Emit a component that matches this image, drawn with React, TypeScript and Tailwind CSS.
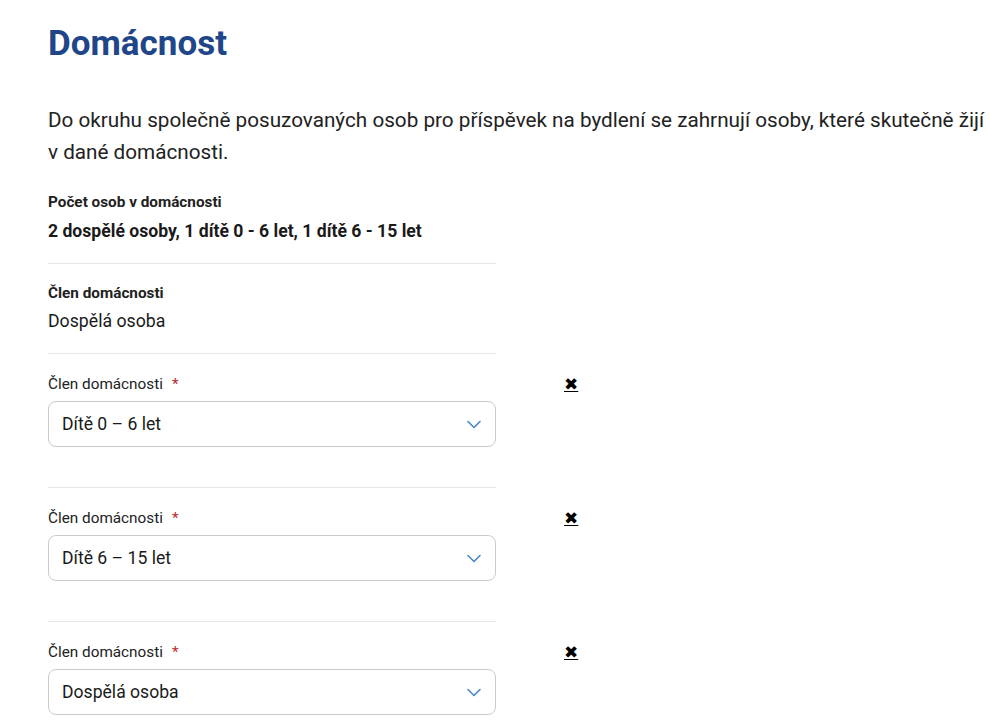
import { useState } from "react";

const options = ["Dospělá osoba", "Dítě 0 – 6 let", "Dítě 6 – 15 let", "Dítě 15 – 26 let"];

function Chevron() {
  return (
    <svg width="14" height="9" viewBox="0 0 14 9" fill="none" className="pointer-events-none">
      <path d="M1 1.5 L7 7.5 L13 1.5" stroke="#4a86c8" strokeWidth="1.6" strokeLinecap="round" strokeLinejoin="round" />
    </svg>
  );
}

function MemberSelect({ initial }: { initial: string }) {
  const [value, setValue] = useState(initial);

  return (
    <div className="flex items-start border-t border-[#e6e6e6] pt-[20px] pb-[40px] w-[448px]">
      <div className="w-[448px] shrink-0">
        <label className="flex items-center h-[20px] text-[15.3px] text-[#222]">
          Člen domácnosti
          <span className="ml-[9px] text-[#c0272d]">*</span>
        </label>
        <div className="relative mt-[7px]">
          <select
            value={value}
            onChange={(e) => setValue(e.target.value)}
            className="appearance-none w-full h-[46px] rounded-[8px] border border-[#cbcbcb] bg-white pl-[13px] pr-10 text-[17.6px] text-[#1a1a1a] outline-none"
          >
            {options.map((o) => (
              <option key={o}>{o}</option>
            ))}
          </select>
          <div className="absolute right-[15px] top-[19px]">
            <Chevron />
          </div>
        </div>
      </div>
      <a
        href="#"
        className="ml-[68px] h-[21px] flex items-center text-[17px] text-black underline shrink-0"
        style={{ fontFamily: '"DejaVu Sans", sans-serif' }}
      >
        ✖
      </a>
    </div>
  );
}

export default function App() {
  return (
    <div className="min-h-screen bg-white pl-[48px] pt-[23px] font-['Roboto',sans-serif] text-[#1f1f1f]">
      <h1 className="text-[35px] leading-[42px] font-bold text-[#1f4689]">Domácnost</h1>

      <p className="mt-[39px] w-[940px] text-[20.7px] leading-[32px] text-[#222]">
        Do okruhu společně posuzovaných osob pro příspěvek na bydlení se zahrnují osoby, které skutečně žijí v dané
        domácnosti.
      </p>

      <div className="mt-[24px] w-[448px] pb-[19px]">
        <div className="text-[15.3px] leading-[20px] font-bold text-[#222]">Počet osob v domácnosti</div>
        <div className="mt-[6px] text-[17.6px] leading-[26px] font-bold text-[#1a1a1a]">
          2 dospělé osoby, 1 dítě 0 - 6 let, 1 dítě 6 - 15 let
        </div>
      </div>

      <div className="w-[448px] border-t border-[#e6e6e6] pt-[19px] pb-[19px]">
        <div className="text-[15.3px] leading-[20px] font-bold text-[#222]">Člen domácnosti</div>
        <div className="mt-[5px] text-[17.7px] leading-[26px] text-[#1a1a1a]">Dospělá osoba</div>
      </div>

      <MemberSelect initial="Dítě 0 – 6 let" />
      <MemberSelect initial="Dítě 6 – 15 let" />
      <MemberSelect initial="Dospělá osoba" />
    </div>
  );
}
